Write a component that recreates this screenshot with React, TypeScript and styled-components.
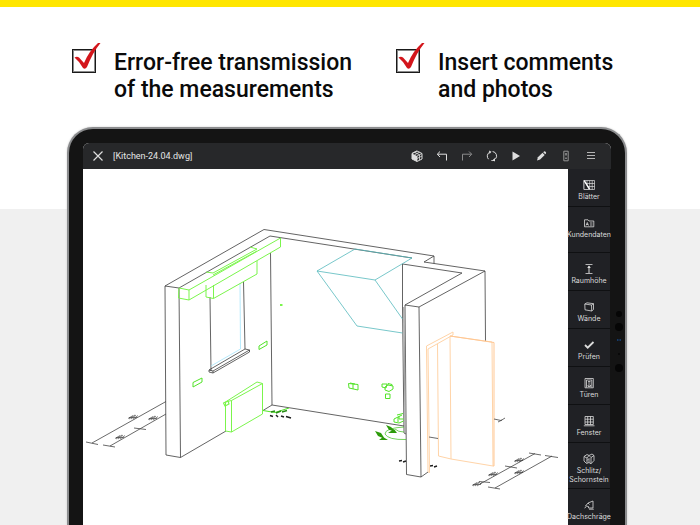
import React from "react";
import styled, { createGlobalStyle } from "styled-components";

const GlobalStyle = createGlobalStyle`
  *, *::before, *::after { box-sizing: border-box; }
  body { margin: 0; background: #ffffff; }
  button { border: 0; padding: 0; background: none; font: inherit; color: inherit; cursor: pointer; }
`;

const Page = styled.div`
  display: flex;
  flex-direction: column;
  height: 100vh;
  overflow: hidden;
  border-top: 7px solid #ffe600;
  background: linear-gradient(#ffffff 202px, #f0f0f0 202px);
`;

const Features = styled.header`
  display: grid;
  grid-template-columns: 324fr 304fr;
  padding: 36px 0 0 72px;
  height: 120px;
  flex: none;
`;

const Feature = styled.label`
  display: flex;
  align-items: flex-start;
  gap: 18px;
  font: 500 23px/27px Roboto, "Liberation Sans", sans-serif;
  color: #0a0a0a;
`;

const TickBox = styled.span`
  position: relative;
  display: block;
  flex: none;
  width: 24px;
  height: 24px;
  margin-top: 6px;

  input {
    appearance: none;
    display: block;
    width: 24px;
    height: 24px;
    margin: 0;
    border: 1px solid #1a1a1a;
    box-shadow: inset 0 0 0 1px #8a8a8a;
    background: #ffffff;
  }

  svg {
    position: absolute;
    left: 0;
    top: -6px;
    width: 30px;
    height: 30px;
    pointer-events: none;
    visibility: hidden;
  }

  input:checked + svg { visibility: visible; }
`;

const FeatureText = styled.span`
  display: block;
  padding-top: 6px;
  white-space: nowrap;
`;

const Tablet = styled.main`
  position: relative;
  flex: 1;
  min-height: 0;
  display: flex;
  margin: 0 73px 0 67px;
  padding: 14px 14px 0 14px;
  border: 2px solid #8b8c8e;
  border-bottom: 0;
  border-radius: 26px 26px 0 0;
  background: #141414;
  box-shadow: 0 0 2px #c4c4c4;
`;

const Sensors = styled.svg`
  position: absolute;
  right: 0;
  top: 178px;
  width: 12px;
  height: 70px;
`;

const Screen = styled.div`
  flex: 1;
  min-width: 0;
  display: flex;
  flex-direction: column;
  overflow: hidden;
  border-radius: 6px 6px 0 0;
  background: #ffffff;
`;

const TopBar = styled.div`
  display: flex;
  align-items: center;
  flex: none;
  height: 26px;
  padding: 0 13px 0 8px;
  background: #27282a;
  color: #e4e4e4;
`;

const FileName = styled.h1`
  flex: 1;
  margin: 0 0 0 8px;
  font: 400 9px/12px Roboto, "Liberation Sans", sans-serif;
  white-space: pre;
`;

const Tools = styled.div`
  display: flex;
  justify-content: space-between;
  width: 188px;
`;

const IconButton = styled.button<{ $dim?: boolean }>`
  width: 14px;
  height: 14px;
  color: ${(p) => (p.$dim ? "#8b8b8c" : "#dedede")};

  svg { display: block; width: 14px; height: 14px; }
`;

const Workspace = styled.div`
  flex: 1;
  min-height: 0;
  display: flex;
`;

const Canvas = styled.svg`
  flex: 1;
  min-width: 0;
  height: 356px;
  background: #ffffff;
`;

const SideBar = styled.nav`
  display: flex;
  flex-direction: column;
  flex: none;
  width: 43px;
  border-right: 1px solid #141414;
  background: #202125;
`;

const SideItem = styled.button<{ $tall?: boolean }>`
  display: flex;
  flex-direction: column;
  align-items: center;
  flex: none;
  height: ${(p) => (p.$tall ? 46 : 38)}px;
  padding-top: 10px;
  border-bottom: 1px solid #0f1012;
  background: #202125;
  color: #dcdcdc;
  font: 400 7px/9px Inter, "Liberation Sans", sans-serif;
  text-align: center;

  svg { display: block; width: 12px; height: 12px; flex: none; }
  span { display: block; margin-top: 1px; white-space: pre; }
`;

const stroke = {
  fill: "none",
  stroke: "currentColor",
  strokeWidth: 1,
};

const icons: Record<string, React.ReactNode> = {
  close: <path d="M2.500 2.500l9 9M11.500 2.500l-9 9" {...stroke} strokeWidth={1.2} />,
  cube: (
    <g>
      <path d="M7 2L12 4.500V10L7 12.500L2 10V4.500Z" fill="none" stroke="currentColor" />
      <path d="M2 4.500L7 7V12.500L2 10Z" fill="currentColor" />
      <path d="M7 7L12 4.500M7 7V12M7 2L2 4.500M4.500 3.200L9.500 5.800V11M9.500 3.200L4.500 5.800M7 9.500L12 7" {...stroke} strokeWidth={0.8} />
    </g>
  ),
  undo: <path d="M5 2.500L2.300 5.200L5 8M2.500 5.200H11.500V11.500" {...stroke} />,
  redo: <path d="M9 2.500L11.700 5.200L9 8M11.500 5.200H2.500V11.500" {...stroke} />,
  sync: (
    <g>
      <path d="M3.500 10.200A4.500 4.500 0 0 1 4.800 3.100M7.600 2.500A4.500 4.500 0 0 1 10.500 9.900M9.300 11.100A4.500 4.500 0 0 1 6.400 11.500" {...stroke} />
      <path d="M4 1.500L6.500 2.800L4.500 5ZM10 9L7.500 11.300L10 12.500Z" fill="currentColor" />
    </g>
  ),
  play: <path d="M3.500 2.500L11 7L3.500 11.500Z" fill="currentColor" />,
  pen: (
    <g fill="currentColor">
      <path d="M3 11.500L3.900 8.300L8.500 3.800L10.700 6L6.100 10.500Z" />
      <path d="M9.200 3.200L10 2.500Q11 2 11.700 2.900Q12.500 3.700 11.900 4.500L11.300 5.200Z" />
    </g>
  ),
  meter: (
    <g {...stroke}>
      <path d="M4.800 2.200H9.200V11.800H4.800Z" stroke="#969696" />
      <path d="M7 4V6.500M7 8.500V10" stroke="#cfcfcf" />
    </g>
  ),
  menu: <path d="M3 3.500H11M3 6.500H11M3 9.500H11" {...stroke} stroke="#b5b5b5" />,
  sheets: (
    <g {...stroke} strokeWidth={0.7}>
      <path d="M1 1.500H11.500V10.500H1ZM4 1.500V10.500M6.700 1.500V10.500M9.200 1.500V10.500M1 4.500H11.500M1 7.500H11.500" />
      <path d="M1 1.500L6.500 10.500H1Z" fill="#202125" />
      <path d="M1.200 1.500L6.500 10.200" stroke="#ffffff" strokeWidth={1.4} />
    </g>
  ),
  customer: (
    <g {...stroke} strokeWidth={0.8}>
      <path d="M1.500 9.800V2.800H5L6 4H10.800V9.800Z" />
      <path d="M3 8.500L4.300 5.500L5.500 8.500M3.500 7.500H5M7 6H9.500M7 8H9.500" />
    </g>
  ),
  height: (
    <g {...stroke}>
      <path d="M2.500 1.500H9.500M2.500 10.500H9.500" strokeWidth={0.8} />
      <path d="M6 3V10" />
      <path d="M4.200 5L6 2.500L7.800 5Z" fill="currentColor" stroke="none" />
    </g>
  ),
  walls: (
    <path d="M1.800 3L4 1.800L10.500 2.700V8.500L8.700 10L2 8.800ZM1.800 3L8.500 4L10.500 2.700M8.500 4L8.700 10" {...stroke} strokeWidth={0.8} />
  ),
  check: <path d="M2 6L4.700 8.700L10.500 3" {...stroke} strokeWidth={1.8} />,
  doors: (
    <g {...stroke} strokeWidth={0.8}>
      <path d="M2 1.500H10.300V10.800H2ZM3.500 10.500V3H8.800V10.500M5 4.500H7.500M5 6H7.500M5 8H7.500V9.500H5Z" />
    </g>
  ),
  windows: (
    <g {...stroke} strokeWidth={0.8}>
      <path d="M2 1.500H10.300V9.500H2ZM4.700 1.500V9.500M7.500 1.500V9.500M2 4.200H10.300M2 7H10.300M0.800 10.800H11.500" />
    </g>
  ),
  chimney: (
    <g {...stroke} strokeWidth={0.8}>
      <path d="M1 3.500L4 1.500L6 2.500L9 1L11 2.500V7.500L8 10.800L6 9.500L3.500 10.500L1 8ZM1 3.500L4 5V10M4 5L6 2.500L8 4.500V10.500M8 4.500L11 2.500M4 7.500L6 5.500V9.500" />
    </g>
  ),
  slope: (
    <path d="M10 2V9H5.500V7.500L2.500 7L5 4ZM5 4L6.500 5.500M1.500 9L3 8M6 10.200H10.800" {...stroke} strokeWidth={0.8} />
  ),
};

function Icon({ name, size = 14 }: { name: string; size?: number }) {
  return (
    <svg viewBox={`0 0 ${size} ${size}`} aria-hidden="true">
      {icons[name]}
    </svg>
  );
}

const tools = [
  { name: "cube", label: "3D" },
  { name: "undo", label: "Undo" },
  { name: "redo", label: "Redo", dim: true },
  { name: "sync", label: "Sync" },
  { name: "play", label: "Play" },
  { name: "pen", label: "Edit" },
  { name: "meter", label: "Laser" },
  { name: "menu", label: "Menu" },
];

const sideItems: { name: string; label: string; tall?: boolean }[] = [
  { name: "sheets", label: "Blätter" },
  { name: "customer", label: "Kundendaten", tall: true },
  { name: "height", label: "Raumhöhe" },
  { name: "walls", label: "Wände" },
  { name: "check", label: "Prüfen" },
  { name: "doors", label: "Türen" },
  { name: "windows", label: "Fenster" },
  { name: "chimney", label: "Schlitz/\nSchornstein", tall: true },
  { name: "slope", label: "Dachschräge" },
];

const features = [
  ["Error-free transmission", "of the measurements"],
  ["Insert comments", "and photos"],
];

/* Slanted hatch used for the tiny dimension figures */
function Figure({ x, y }: { x: number; y: number }) {
  return (
    <path
      transform={`translate(${x} ${y})`}
      d="M-5 1.500L0 -1.500M-4 2L2 -2M-2 2L3 -2M0 2L5 -1.500M-4 0.500L4 0.500"
      stroke="#333"
      strokeWidth={0.6}
    />
  );
}

function KitchenDrawing() {
  return (
    <Canvas viewBox="83 169 485 356" preserveAspectRatio="xMidYMin meet" role="img" aria-label="Kitchen drawing">
      <g fill="none" strokeWidth={0.8} strokeLinejoin="round">
        <g stroke="#3c3c3c">
          <path d="M179 288L165 286L264 229.500L434 256L424 262L485 271L419 307L405 305L462 273L402.500 264V307" />
          <path d="M434 256V263.500M485 271L485.500 341M179 288L270 236L412 258" />
          <path d="M165 286L166 455L180.500 457.500L179 288M180.500 457.500L226 431" />
          <path d="M270.500 253L272 405L263 410.500M272 405L404 426" />
          <path d="M210 297L211 371M243.500 282L245 349" />
          <path d="M209 370L245 349L249.500 350V352L213 373L209 372ZM209 370L213 371V373M213 371L249.500 350" />
          <path d="M402.500 307L404 433M405 305L406.500 474.500L421 477L419 307M421 477L428 472M404 433L406 434" />
        </g>
        <path d="M403.800 307L405.300 433" stroke="#a5a5a5" strokeWidth={1.4} />

        <path d="M240 283L240.500 349L211 366" stroke="#a5e4fb" />
        <path d="M355 249L317 271L375 280L412 258ZM317 271L357 326L402.500 333M375 280L402.500 319" stroke="#55b9bd" />

        <g stroke="#7bf54c" strokeWidth={1}>
          <path d="M179 288L189 290L280.500 238V247L189 300L178.500 298ZM189 290V300" />
          <path d="M206 285V297L213.500 298.500L257 274V261M213.500 285V298.500M206 272L213 273L257 249L250 247M213 275L257 251" />
          <path d="M225.500 402L257 382L262.500 383.500V414L231.500 432L225.500 431ZM231.500 432V400.500L262.500 383.500M225.500 402L231.500 400.500" />
          <path d="M223.500 403L228 401L229 404L225 406Z" strokeWidth={1.2} />
          <path d="M280 305H282.500" strokeWidth={2} />
        </g>
        <g stroke="#52e328" strokeWidth={1}>
          <path d="M259 346L267 341V345L259 349.500ZM193 382.500L202 378V382L193 387Z" />
          <path d="M348.500 383.500L358 384.500V390L349 388ZM353 384V389M350 383L355 384" />
          <path d="M382 384L387 384L386 388L382 387ZM385 387L388 385L393 386V389L389 391.500L385 390ZM388 385V383.500L392 384.500V386M385.500 394H390V398.500H385.500Z" />
          <path d="M394 419L398 417L402 415M394 419V422L399 423L403.500 421M398 417V422M397 415L403 413.500M399 416V419H403.500" />
          <path d="M263 410.500L275 412.500L289 408" />
        </g>
        <path d="M404 427Q385 428 385 434Q388 440 406 439.500M395 429Q398 432 404 432" stroke="#52c735" />
        <g fill="#2d9b0a">
          <path d="M375 431L381 433L385 439L378 436ZM379 440L383 437L388 440ZM386 425L391 427L395 431L389 430ZM388 433L394 429L397 433Z" />
        </g>
        <path d="M271 412L275 411M276 413L281 411M282 412L287 410.500" stroke="#278c14" strokeWidth={1.500} />
        <path d="M270 415.500L273 416.500M276 415L278 417M281 416L284 417M286 416.500L291 418M399 461L402 460.500M403 462L406 461M430 466L433 465.500M434 467L437 466" stroke="#202020" strokeWidth={1.500} />

        <g stroke="#ffd4a8" strokeWidth={1}>
          <path d="M426.500 346L453 332V335L428 349M426.500 346L428 472L429.500 472.500L428 349" />
          <path d="M437.500 344L438.500 456L451 459L450 336L492 342L493 466L451 459" />
          <path d="M450 336L494 342.500V466L493 466" stroke="#ffc793" />
        </g>
        <g stroke="#444">
          <path d="M166 401.500L92 443M86 442L98 444.500M166 414L110 446M103 445L115 447M134 428L146 429.500" />
          <path d="M480 484L535 453.500M529 453L541 455M505 466L517 468M479 481.500L490 482.500M495 488L552 456M488 487L500 489M545 455.500L558 457.500" />
          <path d="M429 437L438 438.500M494 419L501 420.500L505 418M498 422L502 420" />
        </g>
        <Figure x={133} y={417} />
        <Figure x={153} y={418} />
        <Figure x={120} y={437} />
        <Figure x={519} y={460} />
        <Figure x={493} y={474} />
        <Figure x={519} y={472} />
        <Figure x={477} y={484} />
      </g>
    </Canvas>
  );
}

export default function App() {
  return (
    <>
      <GlobalStyle />
      <Page>
        <Features>
          {features.map(([first, second]) => (
            <Feature key={first}>
              <TickBox>
                <input type="checkbox" defaultChecked />
                <svg viewBox="0 0 30 30" aria-hidden="true">
                  <path d="M2.500 14.500Q5 12.800 7 14.500L12 20Q17 8 26 0H28.500Q21 9 15 24Q13 27 11 25Q8 19 2.500 14.500Z" fill="#d3151b" />
                </svg>
              </TickBox>
              <FeatureText>
                {first}
                <br />
                {second}
              </FeatureText>
            </Feature>
          ))}
        </Features>
        <Tablet>
          <Screen>
            <TopBar>
              <IconButton aria-label="Close">
                <Icon name="close" />
              </IconButton>
              <FileName>[Kitchen-24.04.dwg]</FileName>
              <Tools>
                {tools.map((t) => (
                  <IconButton key={t.name} aria-label={t.label} $dim={t.dim}>
                    <Icon name={t.name} />
                  </IconButton>
                ))}
              </Tools>
            </TopBar>
            <Workspace>
              <KitchenDrawing />
              <SideBar>
                {sideItems.map((s) => (
                  <SideItem key={s.name} $tall={s.tall}>
                    <Icon name={s.name} size={12} />
                    <span>{s.label}</span>
                  </SideItem>
                ))}
              </SideBar>
            </Workspace>
          </Screen>
          <Sensors viewBox="0 0 12 70" aria-hidden="true">
            <circle cx="6" cy="7" r="3" fill="#060606" />
            <circle cx="6" cy="20" r="4" fill="#060606" />
            <path d="M4 33H5.500M6.500 33H8" stroke="#153a68" strokeWidth="2" />
            <circle cx="6" cy="47" r="1" fill="#060606" />
            <circle cx="6" cy="61" r="4" fill="#060606" />
          </Sensors>
        </Tablet>
      </Page>
    </>
  );
}
